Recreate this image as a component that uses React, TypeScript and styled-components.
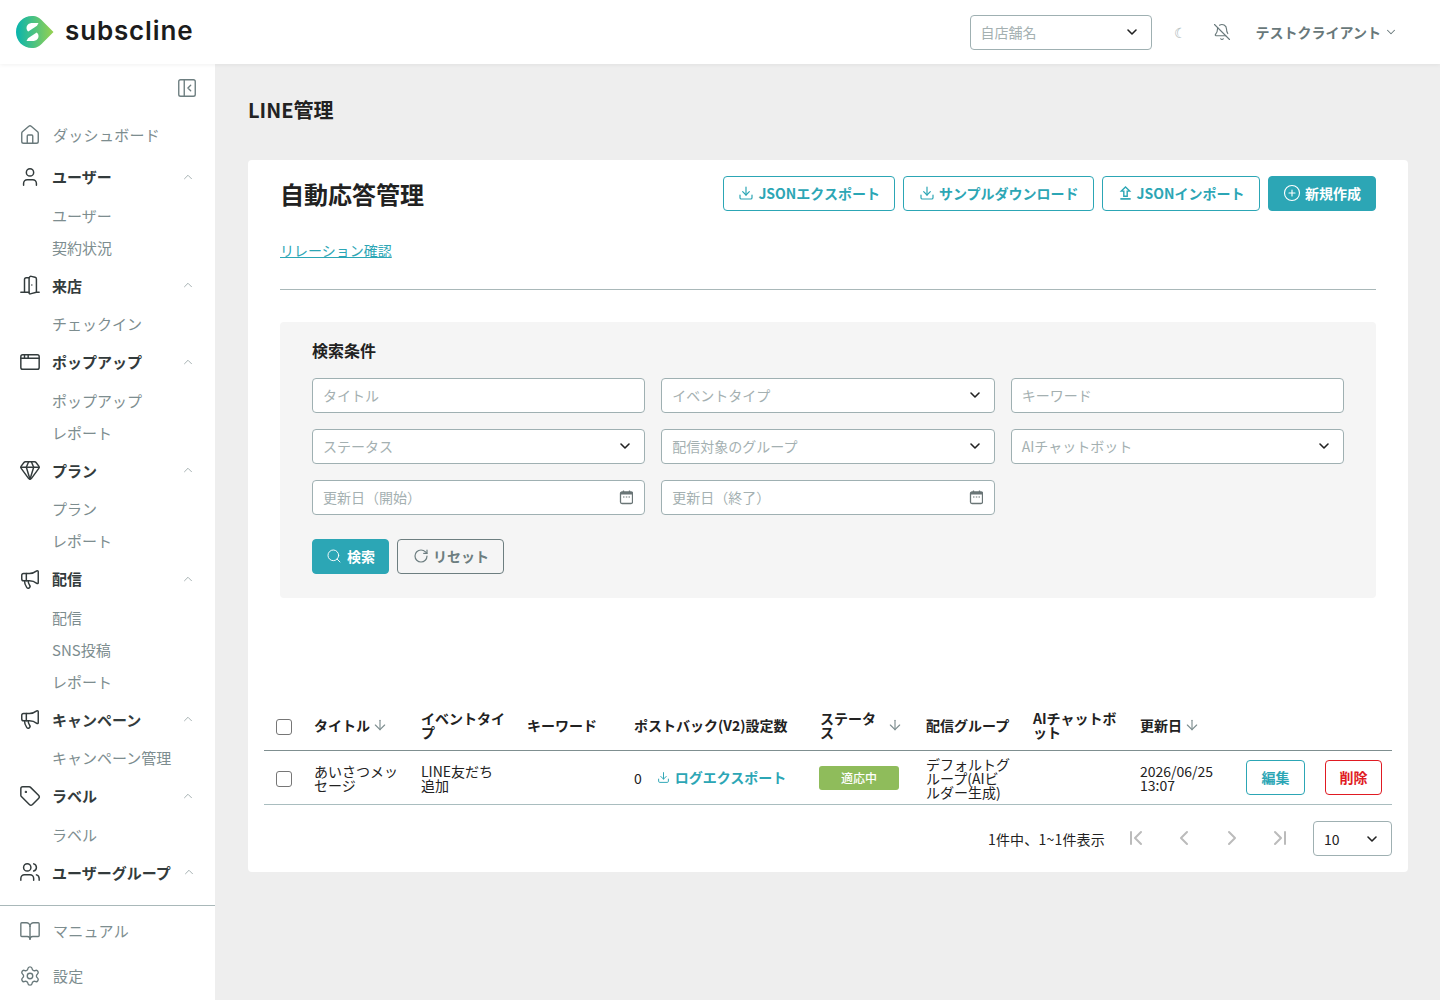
import React from "react";
import styled, { createGlobalStyle } from "styled-components";
import {
  House, User, DoorOpen, AppWindow, Gem, Megaphone, Tag, Users, BookOpen, Settings,
  BellOff, ChevronUp, ChevronDown, PanelLeftClose, Download, CirclePlus, Search, RotateCw,
  ArrowDown, ChevronFirst, ChevronLeft, ChevronRight, ChevronLast, LucideIcon,
} from "lucide-react";

const TEAL = "#2ca6b5";
const FONT = `"Noto Sans CJK JP", "Noto Sans", sans-serif`;

const Global = createGlobalStyle`
  html, body { margin: 0; padding: 0; }
  body { font-family: ${FONT}; background: #eeeeee; color: #222; }
  * { box-sizing: border-box; }
`;

const Page = styled.div`
  width: 1440px;
  height: 1000px;
  overflow: hidden;
  display: flex;
  flex-direction: column;
  background: #eeeeee;
`;

const Header = styled.header`
  height: 64px;
  flex: none;
  background: #fff;
  display: flex;
  align-items: center;
  padding: 0 42px 0 16px;
  box-shadow: 0 1px 4px rgba(0, 0, 0, 0.06);
  position: relative;
  z-index: 2;
`;

const Logo = styled.div`
  display: flex;
  align-items: center;
  gap: 11px;
  margin-right: auto;
`;

const LogoText = styled.span`
  font-family: "Inter", sans-serif;
  font-size: 26px;
  font-weight: 600;
  letter-spacing: 0.85px;
  color: #1c1c1c;
  line-height: 1;
  margin-top: -3px;
`;

const StoreSelect = styled.div`
  width: 182px;
  height: 35px;
  border: 1px solid #9fb0b2;
  border-radius: 4px;
  display: flex;
  align-items: center;
  justify-content: space-between;
  padding: 0 11px 1px 10px;
  font-size: 14px;
  color: #a4b0b1;
  background: #fff;
`;

const MoonGlyph = styled.span`
  width: 14px;
  margin: 0 25px 0 22px;
  font-size: 14px;
  color: #a8b4b5;
  text-align: center;
`;

const UserMenu = styled.div`
  display: flex;
  align-items: center;
  gap: 3px;
  margin-left: 25px;
  font-size: 14px;
  font-weight: 700;
  color: #68787a;
`;

const Body = styled.div`
  flex: 1;
  min-height: 0;
  display: flex;
`;

const Sidebar = styled.aside`
  width: 215px;
  flex: none;
  background: #fff;
  display: flex;
  flex-direction: column;
  justify-content: space-between;
  padding-bottom: 2px;
`;

const ToggleRow = styled.div`
  height: 50.5px;
  display: flex;
  justify-content: flex-end;
  align-items: flex-start;
  padding: 13px 17px 0 0;
  color: #6d7e80;
`;

const NavHead = styled.div<{ $top?: boolean }>`
  height: ${(p) => (p.$top ? "40px" : "44.5px")};
  display: flex;
  align-items: center;
  padding: 0 20px 0 19px;
  gap: ${(p) => (p.$top ? "12px" : "11px")};
  font-size: 15px;
  font-weight: ${(p) => (p.$top ? 400 : 700)};
  letter-spacing: ${(p) => (p.$top ? "0.3px" : "0")};
  color: ${(p) => (p.$top ? "#7d8d8f" : "#333b3c")};
  white-space: nowrap;
  svg.main {
    color: ${(p) => (p.$top ? "#68787a" : "#333b3c")};
    flex: none;
  }
  svg.caret {
    color: #9aa7a8;
    margin-left: auto;
    flex: none;
  }
`;

const SubItem = styled.div`
  height: 32px;
  display: flex;
  align-items: center;
  padding-left: 52px;
  font-size: 15px;
  color: #7d8d8f;
`;

const Footer = styled.div`
  border-top: 1px solid #a9b8b9;
  padding-top: 2px;
`;

const FootItem = styled(NavHead)`
  height: 45px;
`;

const Main = styled.main`
  flex: 1;
  padding: 32px 32px 32px 33px;
  min-width: 0;
`;

const PageTitle = styled.h1`
  margin: 0 0 36px;
  height: 28px;
  line-height: 28px;
  font-size: 20px;
  font-weight: 700;
  color: #222;
`;

const Card = styled.section`
  background: #fff;
  border-radius: 4px;
  padding: 16px;
  height: 712px;
`;

const CardTop = styled.div`
  padding: 0 16px;
`;

const TitleRow = styled.div`
  display: flex;
  align-items: center;
  justify-content: space-between;
  height: 35px;
`;

const CardTitle = styled.h2`
  margin: 0;
  font-size: 24px;
  font-weight: 700;
  color: #222;
`;

const Actions = styled.div`
  display: flex;
  gap: 8px;
`;

const Button = styled.button<{ $variant?: "outline" | "solid" | "ghost" | "danger" }>`
  height: 35px;
  display: inline-flex;
  align-items: center;
  justify-content: center;
  gap: 4px;
  padding: 0 14.5px 1px;
  border-radius: 4px;
  font-family: ${FONT};
  font-size: 14px;
  font-weight: 700;
  white-space: nowrap;
  border: 1px solid
    ${(p) => (p.$variant === "ghost" ? "#6d7e80" : p.$variant === "danger" ? "#e01a22" : TEAL)};
  background: ${(p) => (p.$variant === "solid" ? TEAL : p.$variant === "ghost" ? "transparent" : "#fff")};
  color: ${(p) =>
    p.$variant === "solid" ? "#fff" : p.$variant === "ghost" ? "#6d7e80" : p.$variant === "danger" ? "#e01a22" : TEAL};
`;

const CreateButton = styled(Button)`
  padding: 0 14px 1px;
`;

const SearchButton = styled(Button)`
  padding: 0 13px 2px;
  gap: 5px;
`;

const ResetButton = styled(Button)`
  padding: 0 14px 2px 15px;
`;

const RelationLink = styled.a`
  display: block;
  margin-top: 27px;
  height: 24px;
  line-height: 24px;
  font-size: 14px;
  color: ${TEAL};
  text-decoration: underline;
`;

const Rule = styled.hr`
  margin: 27px 0 32px;
  border: 0;
  border-top: 1px solid #a9b8b9;
`;

const SearchPanel = styled.div`
  background: #f5f5f5;
  border-radius: 4px;
  padding: 15px 32px 24px;
  height: 276px;
`;

const PanelTitle = styled.div`
  font-size: 16px;
  font-weight: 700;
  height: 26px;
  line-height: 26px;
  margin-bottom: 15px;
  color: #222;
`;

const FieldGrid = styled.div`
  display: grid;
  grid-template-columns: repeat(3, 1fr);
  gap: 16px;
`;

const Field = styled.div`
  height: 35px;
  background: #fff;
  border: 1px solid #9fb0b2;
  border-radius: 4px;
  display: flex;
  align-items: center;
  justify-content: space-between;
  padding: 0 11px 1px 10px;
  font-size: 14px;
  color: #a4b0b1;
`;

const TextInput = styled.input`
  border: 0;
  outline: 0;
  padding: 0;
  width: 100%;
  background: transparent;
  font-family: ${FONT};
  font-size: 14px;
  &::placeholder {
    color: #a4b0b1;
    opacity: 1;
  }
`;

const PanelButtons = styled.div`
  display: flex;
  gap: 8px;
  margin-top: 24px;
`;

const TableWrap = styled.div`
  margin-top: 104px;
`;

const Table = styled.table`
  width: 1128px;
  table-layout: fixed;
  border-collapse: collapse;
  font-size: 14px;
  line-height: 1;
  color: #222;
`;

const Th = styled.th`
  height: 48px;
  padding: 0 10px 1px;
  text-align: left;
  font-weight: 700;
  border-bottom: 1px solid #7f8f90;
  vertical-align: middle;
`;

const Td = styled.td`
  height: 54px;
  padding: 1px 10px 0;
  border-bottom: 1px solid #a9bdbf;
  vertical-align: middle;
`;

const GroupCell = styled(Td)`
  padding-right: 12px;
`;

const SortHead = styled.div`
  display: flex;
  align-items: center;
  gap: 2px;
  svg {
    flex: none;
    color: #7d8d8f;
  }
`;

const StatusHead = styled(SortHead)`
  margin-right: 3px;
`;

const WrapLabel = styled.span`
  flex: 1;
`;

const Check = styled.input.attrs({ type: "checkbox" })`
  appearance: none;
  width: 16px;
  height: 16px;
  margin: 3px 0 0 2px;
  display: block;
  background: #fff;
  border: 1px solid #767676;
  border-radius: 3px;
`;

const ExportLink = styled.a`
  display: inline-flex;
  align-items: center;
  gap: 5px;
  margin-left: 15px;
  color: ${TEAL};
  font-weight: 700;
`;

const Badge = styled.span`
  display: block;
  width: 80px;
  height: 24px;
  margin-left: -1px;
  line-height: 24px;
  text-align: center;
  background: #8fbc5b;
  border-radius: 3px;
  color: #fff;
  font-size: 12px;
  font-weight: 500;
`;

const RowButton = styled(Button)`
  width: 100%;
  padding: 0;
  margin-top: -1px;
  display: flex;
`;

const Pager = styled.div`
  margin-top: 16px;
  display: flex;
  justify-content: flex-end;
  align-items: center;
  font-size: 14px;
  color: #222;
`;

const PagerInfo = styled.span`
  margin-right: 7px;
  padding-top: 2px;
  letter-spacing: 0.2px;
`;

const PagerBtn = styled.span`
  width: 48px;
  height: 35px;
  display: flex;
  align-items: center;
  justify-content: center;
  color: #bbbbbb;
`;

const PageSize = styled(Field)`
  width: 79px;
  margin-left: 9px;
  padding: 2px 11px 0 10px;
  color: #222;
`;

const Caret = () => <ChevronDown size={16} strokeWidth={2.4} color="#222" />;

const LogoMark = () => (
  <svg width="38" height="32" viewBox="0 0 38 32" aria-hidden="true">
    <defs>
      <linearGradient id="lg" x1="0" y1="0" x2="1" y2="0">
        <stop offset="0" stopColor="#08b4ae" />
        <stop offset="1" stopColor="#97d14f" />
      </linearGradient>
    </defs>
    <path d="M16 0C21 0 24 2 27 5.500L37.500 16L27 26.500C24 30 21 32 16 32C7 32 0 25 0 16S7 0 16 0Z" fill="url(#lg)" />
    <path d="M22.500 7H16.500C12.500 7 10.500 9.200 10.500 12C10.500 13.600 11.200 14.800 12.300 15.600L21 9.800" fill="#fff" />
    <path d="M10.500 25H16.500C20.500 25 22.500 22.800 22.500 20C22.500 18.400 21.800 17.200 20.700 16.400L12 22.200" fill="#fff" />
  </svg>
);

const CalendarIcon = () => (
  <svg width="16" height="16" viewBox="-1.500 0 16 16" fill="none" aria-hidden="true">
    <rect x="2" y="3" width="12" height="11.500" rx="1.500" stroke="#6a7576" strokeWidth="1.300" />
    <rect x="2" y="3" width="12" height="2.500" fill="#6a7576" />
    <path d="M5 1.500V4M11 1.500V4" stroke="#6a7576" strokeWidth="1.300" />
    <path d="M4.500 8h1.500M7.300 8h1.500M10 8h1.500" stroke="#6a7576" strokeWidth="1.200" />
  </svg>
);

const UploadBar = () => (
  <svg width="15" height="16" viewBox="0 0 16 16" fill="none" aria-hidden="true">
    <path d="M8 1.500L12.500 6H9.800V11.500H6.200V6H3.500Z" fill="none" stroke="currentColor" strokeWidth="1.500" />
    <path d="M2.500 14.300H13.500" stroke="currentColor" strokeWidth="1.800" />
  </svg>
);

type Group = { label: string; icon: LucideIcon; subs: string[] };

const groups: Group[] = [
  { label: "ユーザー", icon: User, subs: ["ユーザー", "契約状況"] },
  { label: "来店", icon: DoorOpen, subs: ["チェックイン"] },
  { label: "ポップアップ", icon: AppWindow, subs: ["ポップアップ", "レポート"] },
  { label: "プラン", icon: Gem, subs: ["プラン", "レポート"] },
  { label: "配信", icon: Megaphone, subs: ["配信", "SNS投稿", "レポート"] },
  { label: "キャンペーン", icon: Megaphone, subs: ["キャンペーン管理"] },
  { label: "ラベル", icon: Tag, subs: ["ラベル"] },
  { label: "ユーザーグループ", icon: Users, subs: [] },
];

const fields: { label: string; kind: "text" | "select" | "date" }[] = [
  { label: "タイトル", kind: "text" },
  { label: "イベントタイプ", kind: "select" },
  { label: "キーワード", kind: "text" },
  { label: "ステータス", kind: "select" },
  { label: "配信対象のグループ", kind: "select" },
  { label: "AIチャットボット", kind: "select" },
  { label: "更新日（開始）", kind: "date" },
  { label: "更新日（終了）", kind: "date" },
];

const Sort = () => <ArrowDown size={16} strokeWidth={1.7} />;

export default function App() {
  return (
    <Page>
      <Global />
      <Header>
        <Logo>
          <LogoMark />
          <LogoText>subscline</LogoText>
        </Logo>
        <StoreSelect>
          自店舗名
          <Caret />
        </StoreSelect>
        <MoonGlyph>☾</MoonGlyph>
        <BellOff size={18} strokeWidth={1.5} color="#68787a" />
        <UserMenu>
          テストクライアント
          <ChevronDown size={14} strokeWidth={1.8} />
        </UserMenu>
      </Header>
      <Body>
        <Sidebar>
          <div>
            <ToggleRow>
              <PanelLeftClose size={22} strokeWidth={1.5} />
            </ToggleRow>
            <NavHead $top>
              <House className="main" size={22} strokeWidth={1.5} />
              ダッシュボード
            </NavHead>
            {groups.map((g) => (
              <div key={g.label}>
                <NavHead>
                  <g.icon className="main" size={22} strokeWidth={1.6} />
                  {g.label}
                  <ChevronUp className="caret" size={14} strokeWidth={1.5} />
                </NavHead>
                {g.subs.map((s) => (
                  <SubItem key={s}>{s}</SubItem>
                ))}
              </div>
            ))}
          </div>
          <Footer>
            <FootItem $top>
              <BookOpen className="main" size={22} strokeWidth={1.5} />
              マニュアル
            </FootItem>
            <FootItem $top>
              <Settings className="main" size={22} strokeWidth={1.5} />
              設定
            </FootItem>
          </Footer>
        </Sidebar>
        <Main>
          <PageTitle>LINE管理</PageTitle>
          <Card>
            <CardTop>
              <TitleRow>
                <CardTitle>自動応答管理</CardTitle>
                <Actions>
                  <Button>
                    <Download size={16} strokeWidth={1.8} />
                    JSONエクスポート
                  </Button>
                  <Button>
                    <Download size={16} strokeWidth={1.8} />
                    サンプルダウンロード
                  </Button>
                  <Button>
                    <UploadBar />
                    JSONインポート
                  </Button>
                  <CreateButton $variant="solid">
                    <CirclePlus size={18} strokeWidth={1.5} />
                    新規作成
                  </CreateButton>
                </Actions>
              </TitleRow>
              <RelationLink>リレーション確認</RelationLink>
              <Rule />
              <SearchPanel>
                <PanelTitle>検索条件</PanelTitle>
                <FieldGrid>
                  {fields.map((f) => (
                    <Field key={f.label}>
                      {f.kind === "text" ? <TextInput placeholder={f.label} /> : f.label}
                      {f.kind === "select" && <Caret />}
                      {f.kind === "date" && <CalendarIcon />}
                    </Field>
                  ))}
                </FieldGrid>
                <PanelButtons>
                  <SearchButton $variant="solid">
                    <Search size={16} strokeWidth={1.4} />
                    検索
                  </SearchButton>
                  <ResetButton $variant="ghost">
                    <RotateCw size={16} strokeWidth={1.8} />
                    リセット
                  </ResetButton>
                </PanelButtons>
              </SearchPanel>
            </CardTop>
            <TableWrap>
              <Table>
                <colgroup>
                  <col width="40" />
                  <col width="107" />
                  <col width="106" />
                  <col width="107" />
                  <col width="186" />
                  <col width="106" />
                  <col width="107" />
                  <col width="107" />
                  <col width="106" />
                  <col width="79" />
                  <col width="77" />
                </colgroup>
                <thead>
                  <tr>
                    <Th>
                      <Check aria-label="全選択" />
                    </Th>
                    <Th>
                      <SortHead>
                        タイトル
                        <Sort />
                      </SortHead>
                    </Th>
                    <Th>イベントタイプ</Th>
                    <Th>キーワード</Th>
                    <Th>ポストバック(V2)設定数</Th>
                    <Th>
                      <StatusHead>
                        <WrapLabel>ステータス</WrapLabel>
                        <Sort />
                      </StatusHead>
                    </Th>
                    <Th>配信グループ</Th>
                    <Th>AIチャットボット</Th>
                    <Th>
                      <SortHead>
                        更新日
                        <Sort />
                      </SortHead>
                    </Th>
                    <Th />
                    <Th />
                  </tr>
                </thead>
                <tbody>
                  <tr>
                    <Td>
                      <Check aria-label="選択" />
                    </Td>
                    <Td>あいさつメッセージ</Td>
                    <Td>LINE友だち追加</Td>
                    <Td />
                    <Td>
                      0
                      <ExportLink>
                        <Download size={13} strokeWidth={1.8} />
                        ログエクスポート
                      </ExportLink>
                    </Td>
                    <Td>
                      <Badge>適応中</Badge>
                    </Td>
                    <GroupCell>デフォルトグループ(AIビルダー生成)</GroupCell>
                    <Td />
                    <Td>2026/06/25 13:07</Td>
                    <Td>
                      <RowButton>編集</RowButton>
                    </Td>
                    <Td>
                      <RowButton $variant="danger">削除</RowButton>
                    </Td>
                  </tr>
                </tbody>
              </Table>
              <Pager>
                <PagerInfo>1件中、1~1件表示</PagerInfo>
                <PagerBtn><ChevronFirst size={24} strokeWidth={2} /></PagerBtn>
                <PagerBtn><ChevronLeft size={24} strokeWidth={2} /></PagerBtn>
                <PagerBtn><ChevronRight size={24} strokeWidth={2} /></PagerBtn>
                <PagerBtn><ChevronLast size={24} strokeWidth={2} /></PagerBtn>
                <PageSize>
                  10
                  <Caret />
                </PageSize>
              </Pager>
            </TableWrap>
          </Card>
        </Main>
      </Body>
    </Page>
  );
}
